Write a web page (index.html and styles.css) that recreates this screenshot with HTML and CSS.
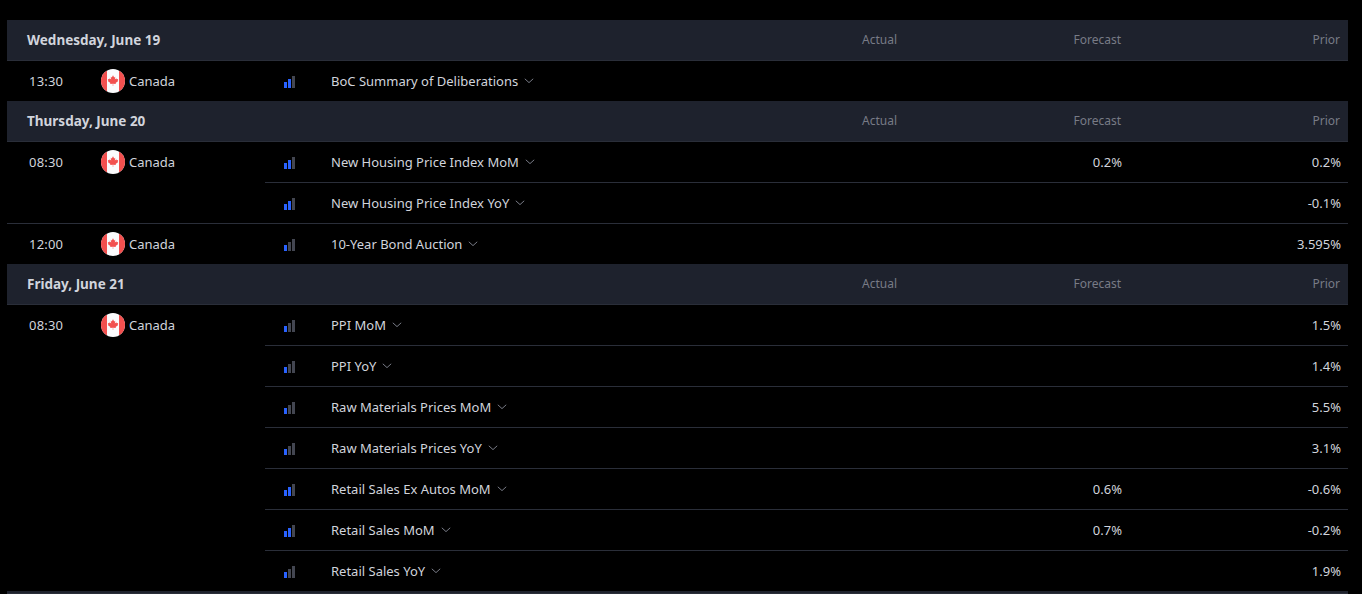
FILE: index.html
```html
<!DOCTYPE html>
<html lang="en">
<head>
<meta charset="utf-8">
<title>Economic Calendar</title>
<link rel="stylesheet" href="styles.css">
</head>
<body>
<svg class="defs" width="0" height="0" aria-hidden="true">
  <symbol id="flag" viewBox="0 0 24 24">
    <clipPath id="round"><circle cx="12" cy="12" r="12"/></clipPath>
    <g clip-path="url(#round)">
      <rect width="24" height="24" fill="#fbfbfd"/>
      <rect width="6" height="24" fill="#f2504f"/>
      <rect x="18" width="6" height="24" fill="#f2504f"/>
      <path fill="#f2504f" d="M12 6.2l1.2 2.2 1.1-.6-.5 2.8 1.5-1.3.4.9 1.5-.2-.5 1.6.6.4-2.7 2.1.3 1-2.7-.4v2.2h-.4v-2.2l-2.7.4.3-1-2.7-2.1.6-.4-.5-1.6 1.5.2.4-.9 1.5 1.3-.5-2.8 1.1.6z"/>
    </g>
  </symbol>
  <symbol id="chev" viewBox="0 0 10 6">
    <path d="M.8.8 5 4.6 9.2.8" fill="none" stroke="currentColor" stroke-width="1"/>
  </symbol>
</svg>
<main class="calendar">

  <section class="day">
    <header class="day-head"><h2 class="day-title">Wednesday, June 19</h2><span class="col actual">Actual</span><span class="col forecast">Forecast</span><span class="col prior">Prior</span></header>
    <div class="group">
      <div class="where"><span class="time">13:30</span><svg class="flag"><use href="#flag"/></svg><span class="country">Canada</span></div>
      <div class="events">
        <div class="event"><span class="bars two"><i></i><i></i><i></i></span><span class="name">BoC Summary of Deliberations<svg class="chev"><use href="#chev"/></svg></span><span class="col actual"></span><span class="col forecast"></span><span class="col prior"></span></div>
      </div>
    </div>
  </section>

  <section class="day">
    <header class="day-head"><h2 class="day-title">Thursday, June 20</h2><span class="col actual">Actual</span><span class="col forecast">Forecast</span><span class="col prior">Prior</span></header>
    <div class="group">
      <div class="where"><span class="time">08:30</span><svg class="flag"><use href="#flag"/></svg><span class="country">Canada</span></div>
      <div class="events">
        <div class="event"><span class="bars two"><i></i><i></i><i></i></span><span class="name">New Housing Price Index MoM<svg class="chev"><use href="#chev"/></svg></span><span class="col actual"></span><span class="col forecast">0.2%</span><span class="col prior">0.2%</span></div>
        <div class="event"><span class="bars two"><i></i><i></i><i></i></span><span class="name">New Housing Price Index YoY<svg class="chev"><use href="#chev"/></svg></span><span class="col actual"></span><span class="col forecast"></span><span class="col prior">-0.1%</span></div>
      </div>
    </div>
    <div class="group">
      <div class="where"><span class="time">12:00</span><svg class="flag"><use href="#flag"/></svg><span class="country">Canada</span></div>
      <div class="events">
        <div class="event"><span class="bars one"><i></i><i></i><i></i></span><span class="name">10-Year Bond Auction<svg class="chev"><use href="#chev"/></svg></span><span class="col actual"></span><span class="col forecast"></span><span class="col prior">3.595%</span></div>
      </div>
    </div>
  </section>

  <section class="day">
    <header class="day-head"><h2 class="day-title">Friday, June 21</h2><span class="col actual">Actual</span><span class="col forecast">Forecast</span><span class="col prior">Prior</span></header>
    <div class="group">
      <div class="where"><span class="time">08:30</span><svg class="flag"><use href="#flag"/></svg><span class="country">Canada</span></div>
      <div class="events">
        <div class="event"><span class="bars one"><i></i><i></i><i></i></span><span class="name">PPI MoM<svg class="chev"><use href="#chev"/></svg></span><span class="col actual"></span><span class="col forecast"></span><span class="col prior">1.5%</span></div>
        <div class="event"><span class="bars one"><i></i><i></i><i></i></span><span class="name">PPI YoY<svg class="chev"><use href="#chev"/></svg></span><span class="col actual"></span><span class="col forecast"></span><span class="col prior">1.4%</span></div>
        <div class="event"><span class="bars one"><i></i><i></i><i></i></span><span class="name">Raw Materials Prices MoM<svg class="chev"><use href="#chev"/></svg></span><span class="col actual"></span><span class="col forecast"></span><span class="col prior">5.5%</span></div>
        <div class="event"><span class="bars one"><i></i><i></i><i></i></span><span class="name">Raw Materials Prices YoY<svg class="chev"><use href="#chev"/></svg></span><span class="col actual"></span><span class="col forecast"></span><span class="col prior">3.1%</span></div>
        <div class="event"><span class="bars two"><i></i><i></i><i></i></span><span class="name">Retail Sales Ex Autos MoM<svg class="chev"><use href="#chev"/></svg></span><span class="col actual"></span><span class="col forecast">0.6%</span><span class="col prior">-0.6%</span></div>
        <div class="event"><span class="bars two"><i></i><i></i><i></i></span><span class="name">Retail Sales MoM<svg class="chev"><use href="#chev"/></svg></span><span class="col actual"></span><span class="col forecast">0.7%</span><span class="col prior">-0.2%</span></div>
        <div class="event"><span class="bars one"><i></i><i></i><i></i></span><span class="name">Retail Sales YoY<svg class="chev"><use href="#chev"/></svg></span><span class="col actual"></span><span class="col forecast"></span><span class="col prior">1.9%</span></div>
      </div>
    </div>
  </section>

  <div class="day-head next"></div>
</main>
</body>
</html>
```
FILE: styles.css
```css
* { box-sizing: border-box; }
html, body { margin: 0; height: 100%; overflow: hidden; background: #000; }
body {
  font-family: "Noto Sans", "Open Sans", sans-serif;
  font-size: 13px;
  color: #d1d4dc;
}
.defs { display: block; height: 0; }
.calendar { padding: 20px 14px 0 7px; }

.day-head {
  display: flex;
  align-items: center;
  height: 41px;
  padding: 0 0 2px 20px;
  background: #1e222d;
  border-bottom: 1px solid #2a2e39;
}
.day-head.next { height: 3px; padding: 0; }
.day-title { margin: 0 0 -2px; flex: 1 1 auto; font-size: 13.5px; font-weight: 700; color: #d1d4dc; }
.day-head .col { font-size: 12px; color: #787b86; }

.col { flex: none; text-align: right; }
.actual { width: 100px; }
.forecast { width: 224px; }
.prior { width: 219px; margin-right: 8px; }
.event .prior { margin-right: 7px; }

.group { display: flex; border-bottom: 1px solid #2a2e39; }
.day > .group:last-child { border-bottom: 0; }

.where { display: flex; align-items: flex-start; flex: none; width: 258px; height: 40px; padding: 8px 0 0 22px; }
.time { width: 72px; line-height: 24px; letter-spacing: .2px; }
.flag { width: 24px; height: 24px; flex: none; }
.country { margin-left: 4px; line-height: 24px; }

.events { flex: 1 1 auto; min-width: 0; }
.event { display: flex; align-items: center; height: 41px; border-bottom: 1px solid #2a2e39; }
.event:last-child { height: 40px; border-bottom: 0; }

.bars { display: flex; align-items: flex-end; gap: 1px; flex: none; width: 12px; height: 12px; margin: 2px 0 0 19px; }
.bars i { display: block; width: 3px; background: #434651; }
.bars i:nth-child(1) { height: 6px; }
.bars i:nth-child(2) { height: 9px; }
.bars i:nth-child(3) { height: 12px; }
.bars.one i:nth-child(1),
.bars.two i:nth-child(1),
.bars.two i:nth-child(2) { background: #2962ff; }

.name { flex: 1 1 auto; display: flex; align-items: center; margin-left: 35px; }
.chev { width: 10px; height: 6px; margin-left: 6px; color: #787b86; }
```
